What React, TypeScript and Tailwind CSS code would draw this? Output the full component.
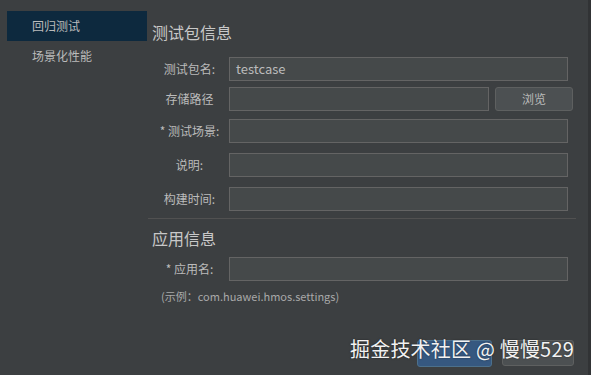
const font = { fontFamily: '"Noto Sans CJK SC", "Noto Sans", sans-serif' }

function Field({ label, value, className = '' }: { label: string; value?: string; className?: string }) {
  return (
    <div className={`flex items-center ${className}`}>
      <div className="w-[81px] pl-[2px] text-center text-[12px] text-[#bbbbbb] leading-none">{label}</div>
      <div className="w-[339px] h-[24px] bg-[#45494a] border border-[#646464] flex items-center px-[6px] text-[13px] text-[#bbbbbb]">
        {value}
      </div>
    </div>
  )
}

export default function App() {
  return (
    <div className="relative w-[591px] h-[375px] bg-[#3c3f41] flex overflow-hidden" style={font}>
      {/* 左侧菜单 */}
      <div className="w-[148px] pl-[7px] pt-[11px]">
        <div className="w-[140px] h-[30px] bg-[#0d293e] flex items-center pl-[25px] text-[12px] text-[#bbbbbb]">
          回归测试
        </div>
        <div className="w-[140px] h-[30px] flex items-center pl-[25px] text-[12px] text-[#bbbbbb]">
          场景化性能
        </div>
      </div>

      {/* 表单区域 */}
      <div className="flex-1 flex flex-col">
        <div className="pl-[4px] pt-[22px]">
          <div className="h-[20px] text-[16px] leading-[20px] text-[#c8c8c8]">测试包信息</div>
        </div>

        <Field className="mt-[15px]" label="测试包名:" value="testcase" />
        <div className="flex items-center mt-[6px]">
          <div className="w-[81px] pl-[2px] text-center text-[12px] text-[#bbbbbb] leading-none">存储路径</div>
          <div className="w-[260px] h-[24px] bg-[#45494a] border border-[#646464]" />
          <button className="ml-[6px] w-[78px] h-[24px] rounded-[3px] bg-[#4c5052] border border-[#5e6060] text-[12px] text-[#bbbbbb]">
            浏览
          </button>
        </div>
        <Field className="mt-[8px]" label="* 测试场景:" />
        <Field className="mt-[10px]" label="说明:" />
        <Field className="mt-[10px]" label="构建时间:" />

        <div className="mt-[7px] w-[428px] h-px bg-[#515151]" />

        <div className="pl-[4px] mt-[9px]">
          <div className="h-[20px] text-[16px] leading-[20px] text-[#c8c8c8]">应用信息</div>
        </div>
        <Field className="mt-[9px]" label="* 应用名:" />
        <div className="mt-[7px] pl-[13px] text-[11px] text-[#a9a9a9]">(示例：com.huawei.hmos.settings)</div>

        <div className="mt-auto mb-[8px] flex justify-end gap-[10px] pr-[14px]">
          <div className="w-[75px] h-[27px] rounded-[3px] bg-[#365880] border border-[#4c708c]" />
          <div className="w-[72px] h-[26px] rounded-[3px] bg-[#4c5052] border border-[#5e6060]" />
        </div>
      </div>

      <div className="w-[3px] bg-[#313335]" />

      {/* 水印 */}
      <div className="absolute left-[350px] top-[336px] text-[20px] leading-[26px] tracking-[0.2px] text-[#f2f2f2] whitespace-nowrap [text-shadow:0_0_2px_rgba(0,0,0,0.5)]">
        掘金技术社区 @ 慢慢529
      </div>
    </div>
  )
}
